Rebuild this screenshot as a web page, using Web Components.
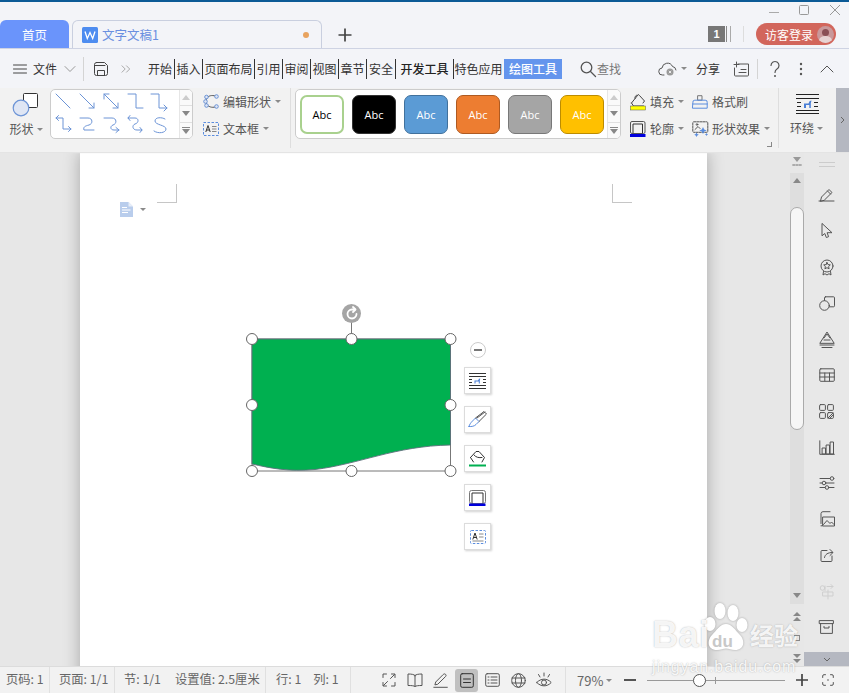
<!DOCTYPE html>
<html lang="zh"><head><meta charset="utf-8"><title>文字文稿1</title>
<style>
html,body{margin:0;padding:0;width:849px;height:693px;overflow:hidden;background:#e6e6e6}
body{font-family:"Noto Sans CJK SC","Liberation Sans",sans-serif;font-size:12px;color:#444}
</style></head><body>
<wps-app></wps-app>
<script>
const D='#444', B='#6c94d6', G='#555';
const L=(s,c=D,w=1)=>`<g fill="none" stroke="${c}" stroke-width="${w}" stroke-linecap="round" stroke-linejoin="round">${s}</g>`;
const ICONS={
 menu:[14,12,L('<path d="M.5 2h13M.5 6h13M.5 10h13"/>',D)],
 chev:[12,8,L('<path d="M1 1.500l5 5 5-5"/>','#999')],
 save:[14,14,L('<path d="M2.500 .5h8l3 3v8a2 2 0 0 1-2 2h-9a2 2 0 0 1-2-2v-9a2 2 0 0 1 2-2z"/><path d="M3.500 13.500v-5h7v5M1 3.500h10"/>',D)],
 dbl:[10,8,L('<path d="M1 .8l3.200 3.200L1 7.200M5.500 .8l3.200 3.200L5.500 7.200"/>','#aaa')],
 search:[16,16,L('<circle cx="6.500" cy="6.500" r="5.300"/><path d="M10.500 10.500l5 5"/>',G,1.300)],
 cloud:[20,16,L('<path d="M6 14H4.500a3.500 3.500 0 0 1-.5-7 5.500 5.500 0 0 1 10.500-1.500 4 4 0 0 1 3.500 3.500"/>',G)+'<circle cx="12" cy="11" r="3.500" fill="#999"/><path d="M10.800 9.800l2.400 2.400M13.200 9.800l-2.400 2.400" stroke="#fff" stroke-width=".8"/>'],
 note:[17,16,L('<path d="M5 3h10.500v11a1 1 0 0 1-1 1H2.500a1 1 0 0 1-1-1V7M3.500 1v5M1 3.500h5M8 8.500h5M6 11.500h7"/>',G)],
 help:[12,18,L('<path d="M2 5.500a4 4 0 1 1 6 3.500c-1.500 1-2 1.700-2 3.500"/>',G,1.200)+'<circle cx="6" cy="16" r="1" fill="#555"/>'],
 dots:[4,14,'<circle cx="2" cy="2" r="1.200" fill="#555"/><circle cx="2" cy="7" r="1.200" fill="#555"/><circle cx="2" cy="12" r="1.200" fill="#555"/>'],
 up:[14,8,L('<path d="M1 7l6-6 6 6"/>',G)],
 word:[16,16,'<rect width="16" height="16" rx="1.500" fill="#4d8cf0"/><path d="M3 4.500l2.300 7 2.700-6 2.700 6 2.300-7" fill="none" stroke="#fff" stroke-width="1.300"/>'],
 plus:[14,14,'<path d="M7 .5v13M.5 7h13" stroke="#444" stroke-width="1.700"/>'],
 shape:[26,24,`<rect x="10.500" y=".5" width="14" height="14" rx="1" fill="#fff" stroke="#333"/><circle cx="8" cy="15" r="7.800" fill="#dfe6f4" stroke="#6c94d6" stroke-width="1.200"/>`],
 edit:[17,15,L('<path d="M4 3.500c3-2.500 6-2.500 9.500-1M13.500 12.500c-3.500 1.500-6.500 1-9.500-1.500M2.500 7.500l1.500-4M2.500 7.500l1.500 3.500"/>','#555')+'<g fill="#dfe6f4" stroke="#6c94d6"><circle cx="3.500" cy="3" r="1.800"/><circle cx="13.500" cy="2.500" r="1.800"/><circle cx="2.500" cy="7.500" r="1.800"/><circle cx="3.500" cy="11.500" r="1.800"/><circle cx="13.500" cy="12.500" r="1.800"/></g>'],
 tbox:[16,14,'<rect x=".5" y=".5" width="15" height="13" fill="none" stroke="#5b8dde" stroke-dasharray="2.500 1.500"/><path d="M2.800 10L5 3.500 7.200 10M3.600 8h2.800" fill="none" stroke="#333"/><path d="M9 4.500h4.500M9 7h4.500M9 9.500h4.500" stroke="#888"/>'],
 fill:[16,17,L('<path d="M1.500 10l6-7.500 1-1 1 1 5 5.500-1.500 2M5 5.500C4 3.500 7 1 8 2.500"/><path d="M1.500 10l2 3h10"/>','#444')+'<rect x=".5" y="13" width="15" height="4" fill="#ffff00" stroke="#555" stroke-width=".5"/>'],
 brush:[16,14,L('<path d="M6 .7h4v4.500H6z"/>','#777')+L('<path d="M.8 7.500a2 2 0 0 1 2-2.300h10.400a2 2 0 0 1 2 2.300v5.700H.8z"/><path d="M.8 9h14.400"/>','#5b8dde')],
 outline:[16,16,'<rect x=".5" y=".5" width="14.500" height="12" rx="1.500" fill="none" stroke="#555"/><path d="M3 12V3h9.500v9" fill="none" stroke="#333"/><rect x="0" y="13" width="15.500" height="3" fill="#0000dd"/>'],
 effect:[16,16,L('<rect x=".8" y=".8" width="15" height="10.500" rx="1" stroke-dasharray="2 1"/><path d="M3 8.500l3-3 2 2"/><circle cx="5" cy="3.500" r=".8"/>','#555')+'<path d="M11 6l1.200 2.500 2.500 1-2.500 1L11 13l-1.200-2.500-2.500-1 2.500-1zM4.500 11.500l.8 1.500 1.500.700-1.500.800-.8 1.500-.8-1.500-1.500-.800 1.500-.700zM14.500 12l.6 1 1 .5-1 .5-.6 1-.6-1-1-.5 1-.5z" fill="#5b8dde"/>'],
 wrap:[23,20,'<path d="M0 .5h23M0 19.500h23M0 16.500h23" stroke="#222"/><path d="M0 4.500h23" stroke="#222"/><path d="M1 8.500h4M1 12.500h4M18 8.500h4M18 12.500h4" stroke="#222"/><path d="M8 14V9.500h4.500l1.200-2.500 1.800-.5-.7 2.500V14h-1.500v-3H10v3z" fill="#4a7fd6"/>'],
 rot:[16,16,L('<path d="M12.500 8A4.500 4.500 0 1 1 8 3.500h3"/><path d="M9 1l2.500 2.500L9 6"/>','#fff',1.800)],
 minus:[12,4,'<path d="M2 2h8" stroke="#777" stroke-width="2"/>'],
 fwrap:[17,16,'<path d="M0 .5h17M0 12.500h17M0 15.500h17M0 3.500h17" stroke="#333"/><path d="M0 6.500h3M0 9.500h3M14 6.500h3M14 9.500h3" stroke="#333"/><path d="M5.500 10.500V7.500h3.500l1-1.700 1.300-.3-.5 1.700v3.300h-1V8.600H6.500v1.900z" fill="#4a7fd6"/>'],
 fbrush:[19,17,L('<path d="M1 15.500c2.500.3 5.500-.3 7-2l3-3-3.500-3.500-3 3c-1.700 1.700-3 3.500-3.500 5.500z"/>','#5b8dde')+L('<path d="M7.500 7l8.500-6.500 2.500 2.500-7.500 7.500M9 7l8-6"/>','#555')],
 ffill:[17,17,L('<path d="M1.500 7.500L7 1.500h3l5.500 6-2.500 4.500M1.500 7.500l3 4.500M5 5c2 2.500 5 3 8 2.500"/>','#333')+'<rect y="14.500" width="17" height="2" fill="#00b050"/>'],
 foutline:[17,16,'<rect x=".5" y=".5" width="16" height="13" rx="2" fill="none" stroke="#777"/><path d="M3 13.500V3h11v10.500" fill="none" stroke="#333"/><rect x="0" y="13.500" width="16.500" height="2.500" fill="#0000dd"/>'],
 ftext:[16,14,'<rect x=".5" y=".5" width="15" height="13" rx="1" fill="none" stroke="#5b8dde" stroke-dasharray="2.500 1.500"/><path d="M2.800 9.500L5 3l2.200 6.500M3.500 7.500h3" fill="none" stroke="#333"/><path d="M9 4h4.500M9 7h4.500M2.500 11h11" stroke="#888"/>'],
 docmark:[13,15,'<path d="M0 0h8.500L13 4.500V15H0z" fill="#b9cdec"/><path d="M8.500 0v4.500H13" fill="#e7eef9"/><path d="M2 5.500h5M2 8h8.500M2 10.500h6" stroke="#fff" stroke-width="1.200"/>'],
 s_pen:[17,14,L('<path d="M1 13h15M2.500 13l1-4L11 1.500l3 3L6.500 12zM9.500 3l3 3"/>',G)],
 s_cur:[12,16,L('<path d="M1 .8v12l2.800-2.300 1.500 4 2.300-.8-1.500-4h4.500z"/>',G)],
 s_med:[14,17,L('<circle cx="7" cy="7" r="6"/><path d="M7 3.500l1 2.100 2.300.3-1.700 1.600.5 2.300L7 8.700 4.900 9.800l.5-2.300L3.700 5.900 6 5.600z"/><path d="M3.500 12.500l-.5 3.500 2-1.300 2 1.300 2-1.300 2 1.300-.5-3.500"/>',G)],
 s_shp:[16,15,L('<rect x="5.500" y=".8" width="10" height="10" rx="1"/><circle cx="5.500" cy="9.500" r="4.800" fill="#e8e8e8"/>',G)],
 s_txt:[16,17,L('<path d="M1 12L8 1l7 11zM5 9h6M5 7l3-4 3 4"/><path d="M1 14h14M3 16.500h10"/>',G)],
 s_tbl:[16,14,L('<rect x=".8" y=".8" width="14.500" height="12.500" rx="1"/><path d="M.8 5h14.500M.8 9h14.500M5.800 5v8M10.500 5v8"/>',G)],
 s_grid:[15,15,L('<rect x=".6" y=".6" width="5.800" height="5.800" rx="1"/><rect x="8.600" y=".6" width="5.800" height="5.800" rx="1"/><rect x=".6" y="8.600" width="5.800" height="5.800" rx="1"/><rect x="8.600" y="8.600" width="5.800" height="5.800" rx="1"/><path d="M9 14l5-5M11 14l3-3"/>',G)],
 s_chart:[16,15,L('<path d="M.8 .8v13.500h14.500"/><rect x="3.500" y="8" width="3" height="6"/><rect x="7.500" y="5" width="3" height="9"/><rect x="11.500" y="2" width="3" height="12"/>',G)],
 s_sl:[16,14,L('<path d="M1 2.500h10M1 7h2M7 7h8M1 11.500h5M10 11.500h5"/><circle cx="13" cy="2.500" r="1.800"/><circle cx="5" cy="7" r="1.800"/><circle cx="8" cy="11.500" r="1.800"/>',G)],
 s_pic:[16,16,L('<path d="M2 12.500V2.500a2 2 0 0 1 2-1.800h7M2 14.800h1"/><rect x="4" y="6" width="11.500" height="9"/><path d="M4.500 13.500l3.500-4 3 3 1.500-1.500 2.500 2.500"/>',G)],
 s_share:[14,14,L('<path d="M7 2.500H2a1 1 0 0 0-1 1v9a1 1 0 0 0 1 1h9a1 1 0 0 0 1-1V8"/><path d="M4.500 9.500c.5-3 3-5 8-5M10 1.500l3 3-3 3"/>',G)],
 s_tr:[16,16,L('<circle cx="3.500" cy="5" r="2.300"/><path d="M6 3v4.500M8 3.500h6l-2-2M14 3.500l-2 2M4 9h10v4H4zM9 7v9"/>','#cfcfcf')],
 s_box:[15,14,L('<rect x=".6" y=".6" width="13.800" height="3"/><path d="M1.600 3.600v9.800h11.800V3.600M5 6.500v1.500h5V6.500"/>',G)],
 t_full:[14,14,L('<path d="M1 4.500V1h3.500M9.500 1H13v3.500M13 9.500V13H9.500M4.500 13H1V9.500M1.500 12.500l4-4M12.500 1.500l-4 4"/>',G)],
 t_book:[16,14,L('<path d="M8 2.500C7 1.500 5 1 1 1v11.500c4 0 6 .300 7 1 1-.700 3-1 7-1V1C11 1 9 1.500 8 2.500zM8 2.500v11"/>',G)],
 t_pen:[15,15,L('<path d="M.8 14.300h13.500M2 11.500l.7-2.500 7.500-7.500c.8-.8 1.700-.8 2.400-.1s.6 1.600-.2 2.300L5 11z"/>',G)],
 t_doc:[14,15,L('<rect x=".7" y=".7" width="12.600" height="13.600" rx="1.500"/><path d="M3.500 6h7M3.500 9.500h7"/>','#333')],
 t_lst:[15,14,L('<rect x=".7" y=".7" width="13.600" height="12.600" rx="1.500"/><path d="M3 4h1M6 4h6M3 7h1M6 7h6M3 10h1M6 10h6"/>',G)],
 t_web:[15,15,L('<circle cx="7.500" cy="7.500" r="6.800"/><ellipse cx="7.500" cy="7.500" rx="3" ry="6.800"/><path d="M1 5h13M1 10h13"/>',G)],
 t_eye:[16,16,L('<path d="M.8 10.500c4-4.500 10.400-4.500 14.400 0-4 4.500-10.400 4.500-14.400 0z"/><circle cx="8" cy="10.500" r="2.500"/><path d="M8 1v3M2.500 2.500l1.500 2.500M13.500 2.500L12 5"/>',G)],
 t_min:[12,2,'<rect width="12" height="2" fill="#555"/>'],
 t_plus:[12,12,'<path d="M6 0v12M0 6h12" stroke="#444" stroke-width="1.700"/>'],
 t_foc:[12,12,L('<path d="M.7 3.500V2a1.300 1.300 0 0 1 1.300-1.300h1.500M8.500 .7H10A1.300 1.300 0 0 1 11.300 2v1.500M11.300 8.500V10A1.300 1.300 0 0 1 10 11.300H8.500M3.500 11.300H2A1.300 1.300 0 0 1 .7 10V8.500"/>','#555')+'<circle cx="6" cy="6" r=".8" fill="#555"/>'],
};
class WI extends HTMLElement{connectedCallback(){if(this.shadowRoot)return;const[w,h,s]=ICONS[this.getAttribute('n')];
 this.attachShadow({mode:'open'}).innerHTML=`<style>:host{display:inline-flex;flex:none}svg{display:block;overflow:visible}</style><svg width="${w}" height="${h}" viewBox="0 0 ${w} ${h}">${s}</svg>`;}}
customElements.define('w-i',WI);

class WArrow extends HTMLElement{constructor(){super();this.attachShadow({mode:'open'}).innerHTML=`<style>:host{display:inline-block;flex:none;width:0;height:0;border:3px solid transparent;border-top:3.500px solid #8a8a8a;border-bottom:0}</style>`}}
customElements.define('w-arrow',WArrow);

class WApp extends HTMLElement{constructor(){super();this.attachShadow({mode:'open'}).innerHTML=`<style>
:host{display:flex;flex-direction:column;width:849px;height:693px;position:relative;overflow:hidden}
.strip{height:2px;background:#0b5a96;flex:none}
</style><div class="strip"></div><wps-tabbar></wps-tabbar><wps-menubar></wps-menubar><wps-ribbon></wps-ribbon><wps-main></wps-main><wps-status></wps-status><wps-mark></wps-mark>`}}

class WTabbar extends HTMLElement{constructor(){super();this.attachShadow({mode:'open'}).innerHTML=`<style>
:host{display:block;flex:none;background:#f3f4f8;border-bottom:1px solid #ced3e3;box-sizing:border-box;height:47px}
.win{height:18px;display:flex;justify-content:flex-end;align-items:center}
.win svg{display:block}
.row{height:28px;display:flex;align-items:flex-end;position:relative}
.home{width:69px;height:28px;background:#6a94fb;border-radius:6px 6px 0 0;color:#fff;font-size:12.500px;display:flex;align-items:center;justify-content:center}
.doc{margin-left:3px;width:250px;height:28px;box-sizing:border-box;border:1px solid #c9cfdf;border-bottom:0;border-radius:6px 6px 0 0;display:flex;align-items:center;padding-left:9px;background:#f3f4f8;color:#6a8fe0;font-size:12.500px}
.doc span{margin-left:4px;flex:1}
.doc i{width:6px;height:6px;border-radius:50%;background:#e8a35f;margin-right:12px}
.add{margin-left:16px;align-self:center;display:flex;margin-top:2px}
.sp{flex:1}
.r{display:flex;align-items:center;height:28px}
.one{width:17px;height:16px;background:#777;color:#fff;font:bold 11px "Liberation Sans",sans-serif;display:flex;align-items:center;justify-content:center}
.bars{width:3px;height:16px;margin-left:1px;border-left:1px solid #888;border-right:1px solid #aaa}
.vs{width:1px;height:16px;background:#ddd;margin:0 12px}
.pill{width:80px;height:22px;border-radius:11px;background:#d2665c;color:#fff;font-size:12px;display:flex;align-items:center;padding-left:9px;box-sizing:border-box;margin-right:13px;position:relative}
.av{position:absolute;right:2px;top:2.500px;width:17px;height:17px;border-radius:50%;background:#c9989a;overflow:hidden}
.av::before{content:"";position:absolute;left:5px;top:3px;width:7px;height:7px;border-radius:50%;background:#8a4f55}
.av::after{content:"";position:absolute;left:2px;top:10px;width:13px;height:9px;border-radius:50%;background:#e7d3d3}
</style>
<div class="win"><svg width="90" height="18" viewBox="0 0 90 18" style="margin-right:5px"><path d="M15 10.500h10" stroke="#aaa"/><rect x="45.500" y="3.500" width="9" height="9" rx="1" fill="none" stroke="#999"/><path d="M76 3l10 10M86 3L76 13" stroke="#999"/></svg></div>
<div class="row"><div class="home">首页</div><div class="doc"><w-i n="word"></w-i><span>文字文稿1</span><i></i></div><div class="add"><w-i n="plus"></w-i></div><div class="sp"></div>
<div class="r"><div class="one">1</div><div class="bars"></div><div class="vs"></div><div class="pill"><span>访客登录</span><div class="av"></div></div></div></div>`}}

class WMenubar extends HTMLElement{constructor(){super();
const tab=(t,w,c='')=>`<div class="t ${c}" style="width:${w}px">${t}</div>`;
this.attachShadow({mode:'open'}).innerHTML=`<style>
:host{display:flex;align-items:center;height:39px;flex:none;background:#f3f4f8;font-size:12px;color:#333;position:relative}
.file{display:flex;align-items:center;margin-left:13px;gap:6px;width:70px}
.file w-i[n=chev]{margin-left:1px}
.v{width:1px;height:24px;background:#d4d4d4}
.sv{margin-left:10px}.dbl{margin-left:13px}
.tabs{display:flex;align-items:center;margin-left:15px;height:20px}
.t{height:20px;line-height:19px;text-align:center;flex:none;position:relative;box-sizing:border-box;white-space:nowrap;color:#333}
.t+.t{border-left:1px solid #333}
.t.on{background:#6495ed;color:#fff;font-weight:500;border-left:0;margin-left:1px}
.t.b{color:#222;font-weight:500}
.s{display:flex;align-items:center;color:#777;margin-left:18px;gap:1px;flex:none;white-space:nowrap}
.sp{flex:1}
.r{display:flex;align-items:center}
.ca{margin:0 0 0 3px}
</style>
<div class="file"><w-i n="menu"></w-i><span>文件</span><w-i n="chev"></w-i></div><div class="v"></div>
<w-i class="sv" n="save"></w-i><w-i class="dbl" n="dbl"></w-i>
<div class="tabs">${tab('开始',28)}${tab('插入',28)}${tab('页面布局',52)}${tab('引用',28)}${tab('审阅',28)}${tab('视图',28)}${tab('章节',28)}${tab('安全',29)}${tab('开发工具',58,'b')}${tab('特色应用',50)}${tab('绘图工具',58,'on')}</div>
<div class="s"><w-i n="search"></w-i><span>查找</span></div><div class="sp"></div>
<div class="r"><w-i n="cloud"></w-i><w-arrow class="ca"></w-arrow><span style="margin-left:9px;color:#333">分享</span><w-i n="note" style="margin-left:13px"></w-i><div class="v" style="margin-left:7px;height:20px"></div><w-i n="help" style="margin-left:11px"></w-i><w-i n="dots" style="margin-left:18px"></w-i><w-i n="up" style="margin:0 15px 0 17px"></w-i></div>`}}

class WRibbon extends HTMLElement{constructor(){super();
const cells=[
 L('<path d="M3 4l14 14"/>',B),
 L('<path d="M3 4l14 14M17 13v5h-5"/>',B),
 L('<path d="M3 4l14 14M3 9V4h5M17 13v5h-5"/>',B),
 L('<path d="M3 4h8v14h7"/>',B),
 L('<path d="M2 4h8v14h8M15 15l3 3-3 3"/>',B),
 L('<path d="M3 4h7v11h8M5.500 1.500L3 4l2.500 2.500M15.500 12.500L18 15l-2.500 2.500"/>',B),
 L('<path d="M3 4h8c5 0 5 6 1 7-4 1-6 2-5 5h10"/>',B),
 L('<path d="M3 4h8c5 0 5 6 1 7-3 1-3 5 1 5h5M15 13.500l3 2.500-3 2.500"/>',B),
 L('<path d="M3 4h7c4 0 4 5 0 6-3 1-3 6 2 6h5M5 1.500L3 4l2 2.500M15 13.500l2 2.500-2 2.500"/>',B),
 L('<path d="M16 5c-3-2-10-2-10 2s11 4 11 8-8 5-12 2"/>',B),
].map(s=>`<svg width="24" height="24" viewBox="0 0 24 24">${s}</svg>`).join('');
const st=[['#fff','#a9d18e','#000'],['#000','#333','#fff'],['#5b9bd5','#41719c','#fff'],['#ed7d31','#ae5a21','#fff'],['#a5a5a5','#787878','#fff'],['#ffc000','#bc8c00','#fff']]
 .map(([b,c,t])=>`<div class="abc" style="background:${b};border-color:${c};color:${t}">Abc</div>`).join('');
const scr=`<div class="scr"><div><svg width="8" height="5"><path d="M4 0l4 5H0z" fill="#ccc"/></svg></div><div><svg width="8" height="5"><path d="M0 0h8L4 5z" fill="#888"/></svg></div><div><svg width="8" height="7"><path d="M0 .5h8" stroke="#888"/><path d="M0 2h8L4 7z" fill="#888"/></svg></div></div>`;
this.attachShadow({mode:'open'}).innerHTML=`<style>
:host{display:flex;height:64px;flex:none;background:#f2f2f2;color:#555;font-size:12px;position:relative;box-shadow:0 1px 1px #e4e4e4;z-index:2}
.shape{width:50px;display:flex;flex-direction:column;align-items:center;padding-top:5px;box-sizing:border-box}
.shape w-i{margin-left:2px}
.lb{display:flex;align-items:center;gap:3px;white-space:nowrap;line-height:14px}
.shape .lb{margin-top:5px;margin-left:2px}
.pan{margin-top:1px;height:50px;box-sizing:border-box;border:1px solid #ccc;border-radius:5px;background:#fff;display:flex;overflow:hidden}
.gal{width:143px}
.cells{width:130px;display:grid;grid-template-columns:repeat(5,24px);grid-auto-rows:24px;padding-left:2px;box-sizing:border-box}
.cells svg{display:block;overflow:visible}
.scr{margin-left:auto;width:12px;border-left:1px solid #e6e6e6;background:#fafafa;display:flex;flex-direction:column;flex:none}
.scr div{flex:1;display:flex;align-items:center;justify-content:center;border-top:1px solid #e0e0e0}
.scr div:first-child{border-top:0}
.col{display:flex;flex-direction:column;box-sizing:border-box}
.it{height:27px;display:flex;align-items:center;gap:4px;white-space:nowrap}
.sep{width:1px;height:60px;background:#dedede;flex:none}
.sty{width:326px;margin-left:4px}
.abcs{display:flex;gap:8px;padding:5px 0 0 4px}
.abc{width:44px;height:39px;box-sizing:border-box;border:1px solid;border-radius:7px;font:11px "Open Sans","Liberation Sans",sans-serif;display:flex;align-items:center;justify-content:center}
.abc:first-child{border-width:2px}
.wrapc{width:57px;display:flex;flex-direction:column;align-items:center;padding-top:6px;position:relative;box-sizing:border-box}
.wrapc .lb{margin-top:7px;margin-left:-2px}
.col2{position:relative}
.corner{position:absolute;right:6px;bottom:5px;width:4px;height:4px;border-right:1px solid #888;border-bottom:1px solid #888}
.co{width:13px;background:#b5b8c1;display:flex;align-items:center;justify-content:center;flex:none}
</style>
<div class="shape"><w-i n="shape"></w-i><div class="lb">形状<w-arrow></w-arrow></div></div>
<div class="pan gal"><div class="cells">${cells}</div>${scr}</div>
<div class="col" style="width:97px;padding-left:10px"><div class="it"><w-i n="edit"></w-i><span style="margin-left:-1px">编辑形状</span><w-arrow></w-arrow></div><div class="it"><w-i n="tbox"></w-i><span>文本框</span><w-arrow></w-arrow></div></div>
<div class="sep"></div>
<div class="pan sty"><div class="abcs">${st}</div>${scr}</div>
<div class="col" style="width:62px;margin-left:9px"><div class="it"><w-i n="fill"></w-i><span>填充</span><w-arrow></w-arrow></div><div class="it"><w-i n="outline"></w-i><span>轮廓</span><w-arrow></w-arrow></div></div>
<div class="col col2" style="width:86px"><div class="it"><w-i n="brush"></w-i><span>格式刷</span></div><div class="it"><w-i n="effect"></w-i><span>形状效果</span><w-arrow></w-arrow></div><div class="corner"></div></div>
<div class="sep"></div>
<div class="wrapc"><w-i n="wrap"></w-i><div class="lb">环绕<w-arrow></w-arrow></div></div>
<div class="co"><svg width="5" height="8"><path d="M1 1l3 3-3 3" fill="none" stroke="#666"/></svg></div>`}}

class WMain extends HTMLElement{constructor(){super();this.attachShadow({mode:'open'}).innerHTML=`<style>
:host{display:flex;height:514px;flex:none;background:#e7e7e7;overflow:hidden}
.area{width:790px;flex:none;padding-left:80px;box-sizing:border-box}
</style><div class="area"><wps-page></wps-page></div><wps-scroll></wps-scroll><wps-side></wps-side>`}}

class WPage extends HTMLElement{constructor(){super();
const hs=[[252,339],[351.500,339],[450.500,339],[252,405],[450.500,405],[252,471],[351.500,471],[450.500,471]].map(([x,y])=>`<circle cx="${x-240}" cy="${y-300}" r="5.500" fill="#fff" stroke="#666"/>`).join('');
this.attachShadow({mode:'open'}).innerHTML=`<style>
:host{display:block;position:relative;width:627px;height:560px;background:#fff;box-shadow:0 0 16px rgba(0,0,0,.28)}
.crop{position:absolute;width:19px;height:18px;top:32px;border-bottom:1px solid #c6c6c6}
.c1{left:77px;border-right:1px solid #c6c6c6}
.c2{left:532px;border-left:1px solid #c6c6c6}
.dm{position:absolute;left:40px;top:50px;display:flex;align-items:center;gap:7px}
.sh{position:absolute;left:160px;top:148px;display:block;overflow:visible}
.rot{position:absolute;left:262px;top:152px;width:19px;height:19px;border-radius:50%;background:#a5a5a5;display:flex;align-items:center;justify-content:center}
.fl{position:absolute;left:384px;top:190px;display:flex;flex-direction:column;gap:12px;align-items:center}
.mn{width:16px;height:16px;box-sizing:border-box;border:1px solid #ccc;border-radius:50%;display:flex;align-items:center;justify-content:center;background:#fff;margin-bottom:-3px}
.b{width:27px;height:27px;box-sizing:border-box;background:#fff;border:1px solid #dcdcdc;box-shadow:1px 1px 2px rgba(0,0,0,.18);display:flex;align-items:center;justify-content:center}
</style>
<div class="crop c1"></div><div class="crop c2"></div>
<div class="dm"><w-i n="docmark"></w-i><w-arrow></w-arrow></div>
<svg class="sh" width="260" height="185" viewBox="0 0 260 185">
<path d="M111.500 20v19" stroke="#777"/>
<rect x="12" y="39" width="198.500" height="132" fill="none" stroke="#777"/>
<path d="M12 39H210.500V145C155 146 120 164 75 169.500C48 172 30 168 12 164z" fill="#00b050"/>
<path d="M12 164V39H210.500V145C155 146 120 164 75 169.500C48 172 30 168 12 164" fill="none" stroke="#5d6f7c" stroke-width=".9"/>
${hs}</svg>
<div class="rot"><w-i n="rot"></w-i></div>
<div class="fl"><div class="mn"><w-i n="minus"></w-i></div><div class="b"><w-i n="fwrap"></w-i></div><div class="b"><w-i n="fbrush"></w-i></div><div class="b"><w-i n="ffill"></w-i></div><div class="b"><w-i n="foutline"></w-i></div><div class="b"><w-i n="ftext"></w-i></div></div>`}}

class WScroll extends HTMLElement{constructor(){super();this.attachShadow({mode:'open'}).innerHTML=`<style>
:host{display:flex;flex-direction:column;align-items:center;width:14px;flex:none;height:514px;position:relative}
svg{display:block}
.top{height:21px;display:flex;justify-content:center;padding-top:5px;box-sizing:border-box;flex:none}
.tr{width:14px;height:431px;background:#dedede;flex:none;display:flex;flex-direction:column;align-items:center}
.a{height:34px;padding-top:5px;box-sizing:border-box;flex:none}
.th{width:14px;height:223px;box-sizing:border-box;background:#f6f6f6;border:1px solid #aaa;border-radius:7px;flex:none}
.g{flex:1}
.dn{padding-bottom:6px}
.bt{display:flex;flex-direction:column;align-items:center;gap:13px;padding-top:8px}
</style>
<div class="top"><svg width="10" height="10"><path d="M1 0h8L5 5z" fill="#999"/><path d="M0 8h10M2 7v2M5 7v2M8 7v2" stroke="#999"/></svg></div>
<div class="tr"><div class="a"><svg width="8" height="5"><path d="M4 0l4 5H0z" fill="#888"/></svg></div><div class="th"></div><div class="g"></div><div class="dn"><svg width="8" height="5"><path d="M0 0h8L4 5z" fill="#888"/></svg></div></div>
<div class="bt"><svg width="8" height="10"><path d="M4 0l4 4H0zM4 5l4 4H0z" fill="#888"/></svg><svg width="6" height="6"><rect x=".5" y=".5" width="5" height="5" fill="none" stroke="#888"/></svg><svg width="8" height="10"><path d="M0 0h8L4 4zM0 5h8L4 9z" fill="#888"/></svg></div>`}}

class WSide extends HTMLElement{constructor(){super();
const n=['s_pen','s_cur','s_med','s_shp','s_txt','s_tbl','s_grid','s_chart','s_sl','s_pic','s_share','s_tr','s_box'];
this.attachShadow({mode:'open'}).innerHTML=`<style>
:host{display:flex;flex-direction:column;width:45px;flex:none;height:514px;background:#e8e8e8;align-items:center}
.h{height:25px;flex:none;display:flex;align-items:flex-start;padding-top:10px;box-sizing:border-box}
.h i{display:block;width:16px;height:3px;border-top:1px solid #ccc;border-bottom:1px solid #ccc}
.l{flex:1;display:flex;flex-direction:column;width:100%}
.l div{height:36px;display:flex;align-items:center;justify-content:center;flex:none}
.co{height:14px;width:100%;background:#b5b8c1;flex:none;display:flex;align-items:center;justify-content:center}
</style><div class="h"><i></i></div><div class="l">${n.map(x=>`<div><w-i n="${x}"></w-i></div>`).join('')}</div>
<div class="co"><svg width="8" height="5"><path d="M1 1l3 3 3-3" fill="none" stroke="#666"/></svg></div>`}}

class WStatus extends HTMLElement{constructor(){super();
this.attachShadow({mode:'open'}).innerHTML=`<style>
:host{display:flex;align-items:center;height:27px;flex:none;box-sizing:border-box;background:#f2f2f2;border-top:1px solid #dcdcdc;color:#666;font-size:12.300px;z-index:2;position:relative;white-space:nowrap}
.c{height:26px;line-height:25px;padding-left:6px;box-sizing:border-box;flex:none}
.v{width:1px;height:26px;background:#e0e0e0;flex:none}
.ic{display:flex;align-items:center;justify-content:center;height:23px;flex:none}
.on{background:#c0c0c0;border-radius:3px}
.sl{position:relative;width:138px;height:1px;background:#999;margin-left:11px;flex:none}
.k{position:absolute;left:46px;top:-6px;width:13px;height:13px;box-sizing:border-box;border-radius:50%;border:1.500px solid #555;background:#fff}
.tk{position:absolute;left:68px;top:-3px;width:1px;height:7px;background:#999}
</style>
<div class="c" style="width:49px">页码: 1</div><div class="v"></div>
<div class="c" style="width:64px;padding-left:9px">页面: 1/1</div><div class="v"></div>
<div class="c" style="width:150px;padding-left:9px">节: 1/1<span style="margin-left:14px">设置值: 2.5厘米</span></div><div class="v"></div>
<div class="c" style="width:84px;padding-left:10px">行: 1<span style="margin-left:12px">列: 1</span></div><div class="v"></div>
<div class="ic" style="margin-left:31px;width:14px"><w-i n="t_full"></w-i></div>
<div class="ic" style="margin-left:11px;width:16px"><w-i n="t_book"></w-i></div>
<div class="ic" style="margin-left:10px;width:15px"><w-i n="t_pen"></w-i></div>
<div class="ic on" style="margin-left:7px;width:23px"><w-i n="t_doc"></w-i></div>
<div class="ic" style="margin-left:7px;width:15px"><w-i n="t_lst"></w-i></div>
<div class="ic" style="margin-left:11px;width:15px"><w-i n="t_web"></w-i></div>
<div class="ic" style="margin-left:10px;width:16px"><w-i n="t_eye"></w-i></div>
<div class="v" style="margin-left:13px"></div>
<span style="margin-left:11px;font-size:13px;width:29px">79%</span><w-arrow></w-arrow>
<div class="ic" style="margin-left:12px;width:12px"><w-i n="t_min"></w-i></div>
<div class="sl"><div class="k"></div><div class="tk"></div></div>
<div class="ic" style="margin-left:11px;width:12px"><w-i n="t_plus"></w-i></div>
<div class="ic" style="margin-left:14px;width:12px"><w-i n="t_foc"></w-i></div>`}}

class WMark extends HTMLElement{constructor(){super();this.attachShadow({mode:'open'}).innerHTML=`<style>
:host{position:absolute;left:650px;top:598px;width:160px;height:85px;z-index:5;pointer-events:none;color:rgba(255,255,255,.9);font-family:"Liberation Sans",sans-serif;text-shadow:0 0 1.500px rgba(120,120,120,.6)}
svg{position:absolute;left:50px;top:2px;filter:drop-shadow(0 0 .8px rgba(120,120,120,.6))}
.ba{position:absolute;left:2px;top:18px;font:bold 36px/38px "Liberation Sans",sans-serif;letter-spacing:.5px}
.du{position:absolute;left:62px;top:34px;font:bold 17px/20px "Liberation Sans",sans-serif;color:#c8c8c8;text-shadow:none}
.jy{position:absolute;left:100px;top:22px;font:bold 24px/30px "Noto Sans CJK SC",sans-serif}
.u{position:absolute;left:2px;top:60px;font:16px/18px "Liberation Sans",sans-serif;letter-spacing:.9px;white-space:nowrap}
</style><svg width="52" height="55" viewBox="0 0 52 55" fill="#fff"><ellipse cx="10" cy="24" rx="5.500" ry="7"/><ellipse cx="20" cy="11" rx="5.500" ry="8"/><ellipse cx="33" cy="13" rx="5.500" ry="8"/><ellipse cx="42" cy="25" rx="5.500" ry="7"/><path d="M26 24c-6 0-9 6-14 11-5 5-5 15 5 15 4 0 6-1.500 9-1.500s5 1.500 9 1.500c10 0 10-10 5-15-5-5-8-11-14-11z"/></svg><div class="ba">Bai</div><div class="du">du</div><div class="jy">经验</div><div class="u">jingyan.baidu.com</div>`}}

customElements.define('wps-tabbar',WTabbar);customElements.define('wps-menubar',WMenubar);customElements.define('wps-ribbon',WRibbon);
customElements.define('wps-page',WPage);customElements.define('wps-scroll',WScroll);customElements.define('wps-side',WSide);customElements.define('wps-main',WMain);
customElements.define('wps-status',WStatus);customElements.define('wps-mark',WMark);customElements.define('wps-app',WApp);
</script></body></html>
